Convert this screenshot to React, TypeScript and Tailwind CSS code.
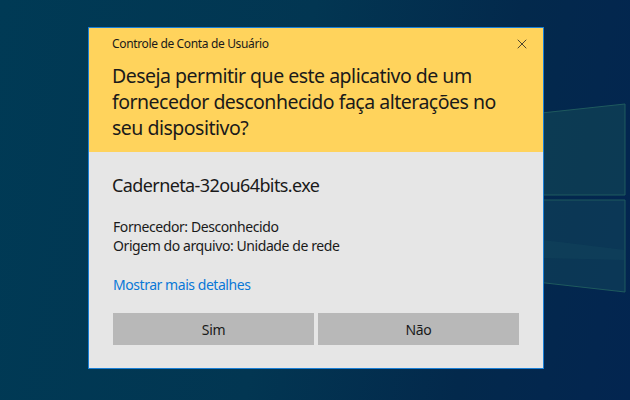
import { X } from "lucide-react";

const font = { fontFamily: '"Noto Sans", "Open Sans", sans-serif' };

export default function App() {
  return (
    <div
      className="relative w-[630px] h-[400px] overflow-hidden bg-[linear-gradient(100deg,#003a55_0%,#023652_45%,#03294c_75%,#032550_100%)]"
      style={font}
    >
      {/* windows logo panes on the desktop */}
      <svg
        className="absolute left-0 top-0"
        width="630"
        height="400"
        viewBox="0 0 630 400"
      >
        <polygon
          points="430,125 625,104 625,195 430,195"
          fill="#0f4055"
          fillOpacity="0.8"
          stroke="#1f5a5e"
          strokeWidth="1"
        />
        <polygon
          points="430,200 625,200 625,292 430,270"
          fill="#0e3c58"
          fillOpacity="0.8"
          stroke="#1f5a5e"
          strokeWidth="1"
        />
        <polygon points="543,240 625,250 625,260 543,258" fill="#134a5e" fillOpacity="0.35" />
      </svg>

      <div className="relative flex pl-[88px] pt-[27px]">
        <div className="w-[456px] border border-[#1a7fd6] flex flex-col">
          <div className="bg-[#ffd35c] pl-[23px] pr-[13px] pt-[7px] pb-[11px]">
            <div className="flex items-center justify-between">
              <span className="text-[12px] leading-[18px] text-[#1a1a1a] tracking-[-0.35px]">
                Controle de Conta de Usuário
              </span>
              <X size={16} strokeWidth={1.2} className="text-[#222]" />
            </div>
            <p className="mt-[10px] text-[19.5px] leading-[26px] text-[#1a1a1a] tracking-[-0.5px]">
              Deseja permitir que este aplicativo de um
              <br />
              fornecedor desconhecido faça alterações no
              <br />
              seu dispositivo?
            </p>
          </div>

          <div className="bg-[#e6e6e6] px-[24px] pt-[21px] pb-[23px]">
            <p className="text-[18px] leading-[24px] text-[#1a1a1a] -ml-px tracking-[-0.6px]">
              Caderneta-32ou64bits.exe
            </p>
            <div className="mt-[20px] text-[14px] leading-[19px] text-[#1a1a1a] tracking-[-0.42px]">
              <p>Fornecedor: Desconhecido</p>
              <p>Origem do arquivo: Unidade de rede</p>
            </div>
            <p className="mt-[20px] text-[14px] leading-[19px] text-[#0a78d7] tracking-[-0.45px]">
              Mostrar mais detalhes
            </p>
            <div className="mt-[19px] flex gap-[4px]">
              <button className="w-[201px] h-[32px] bg-[#b8b8b8] text-[14px] text-[#1a1a1a] tracking-[-0.3px]">
                Sim
              </button>
              <button className="w-[201px] h-[32px] bg-[#b8b8b8] text-[14px] text-[#1a1a1a] tracking-[-0.3px]">
                Não
              </button>
            </div>
          </div>
        </div>
      </div>
    </div>
  );
}
